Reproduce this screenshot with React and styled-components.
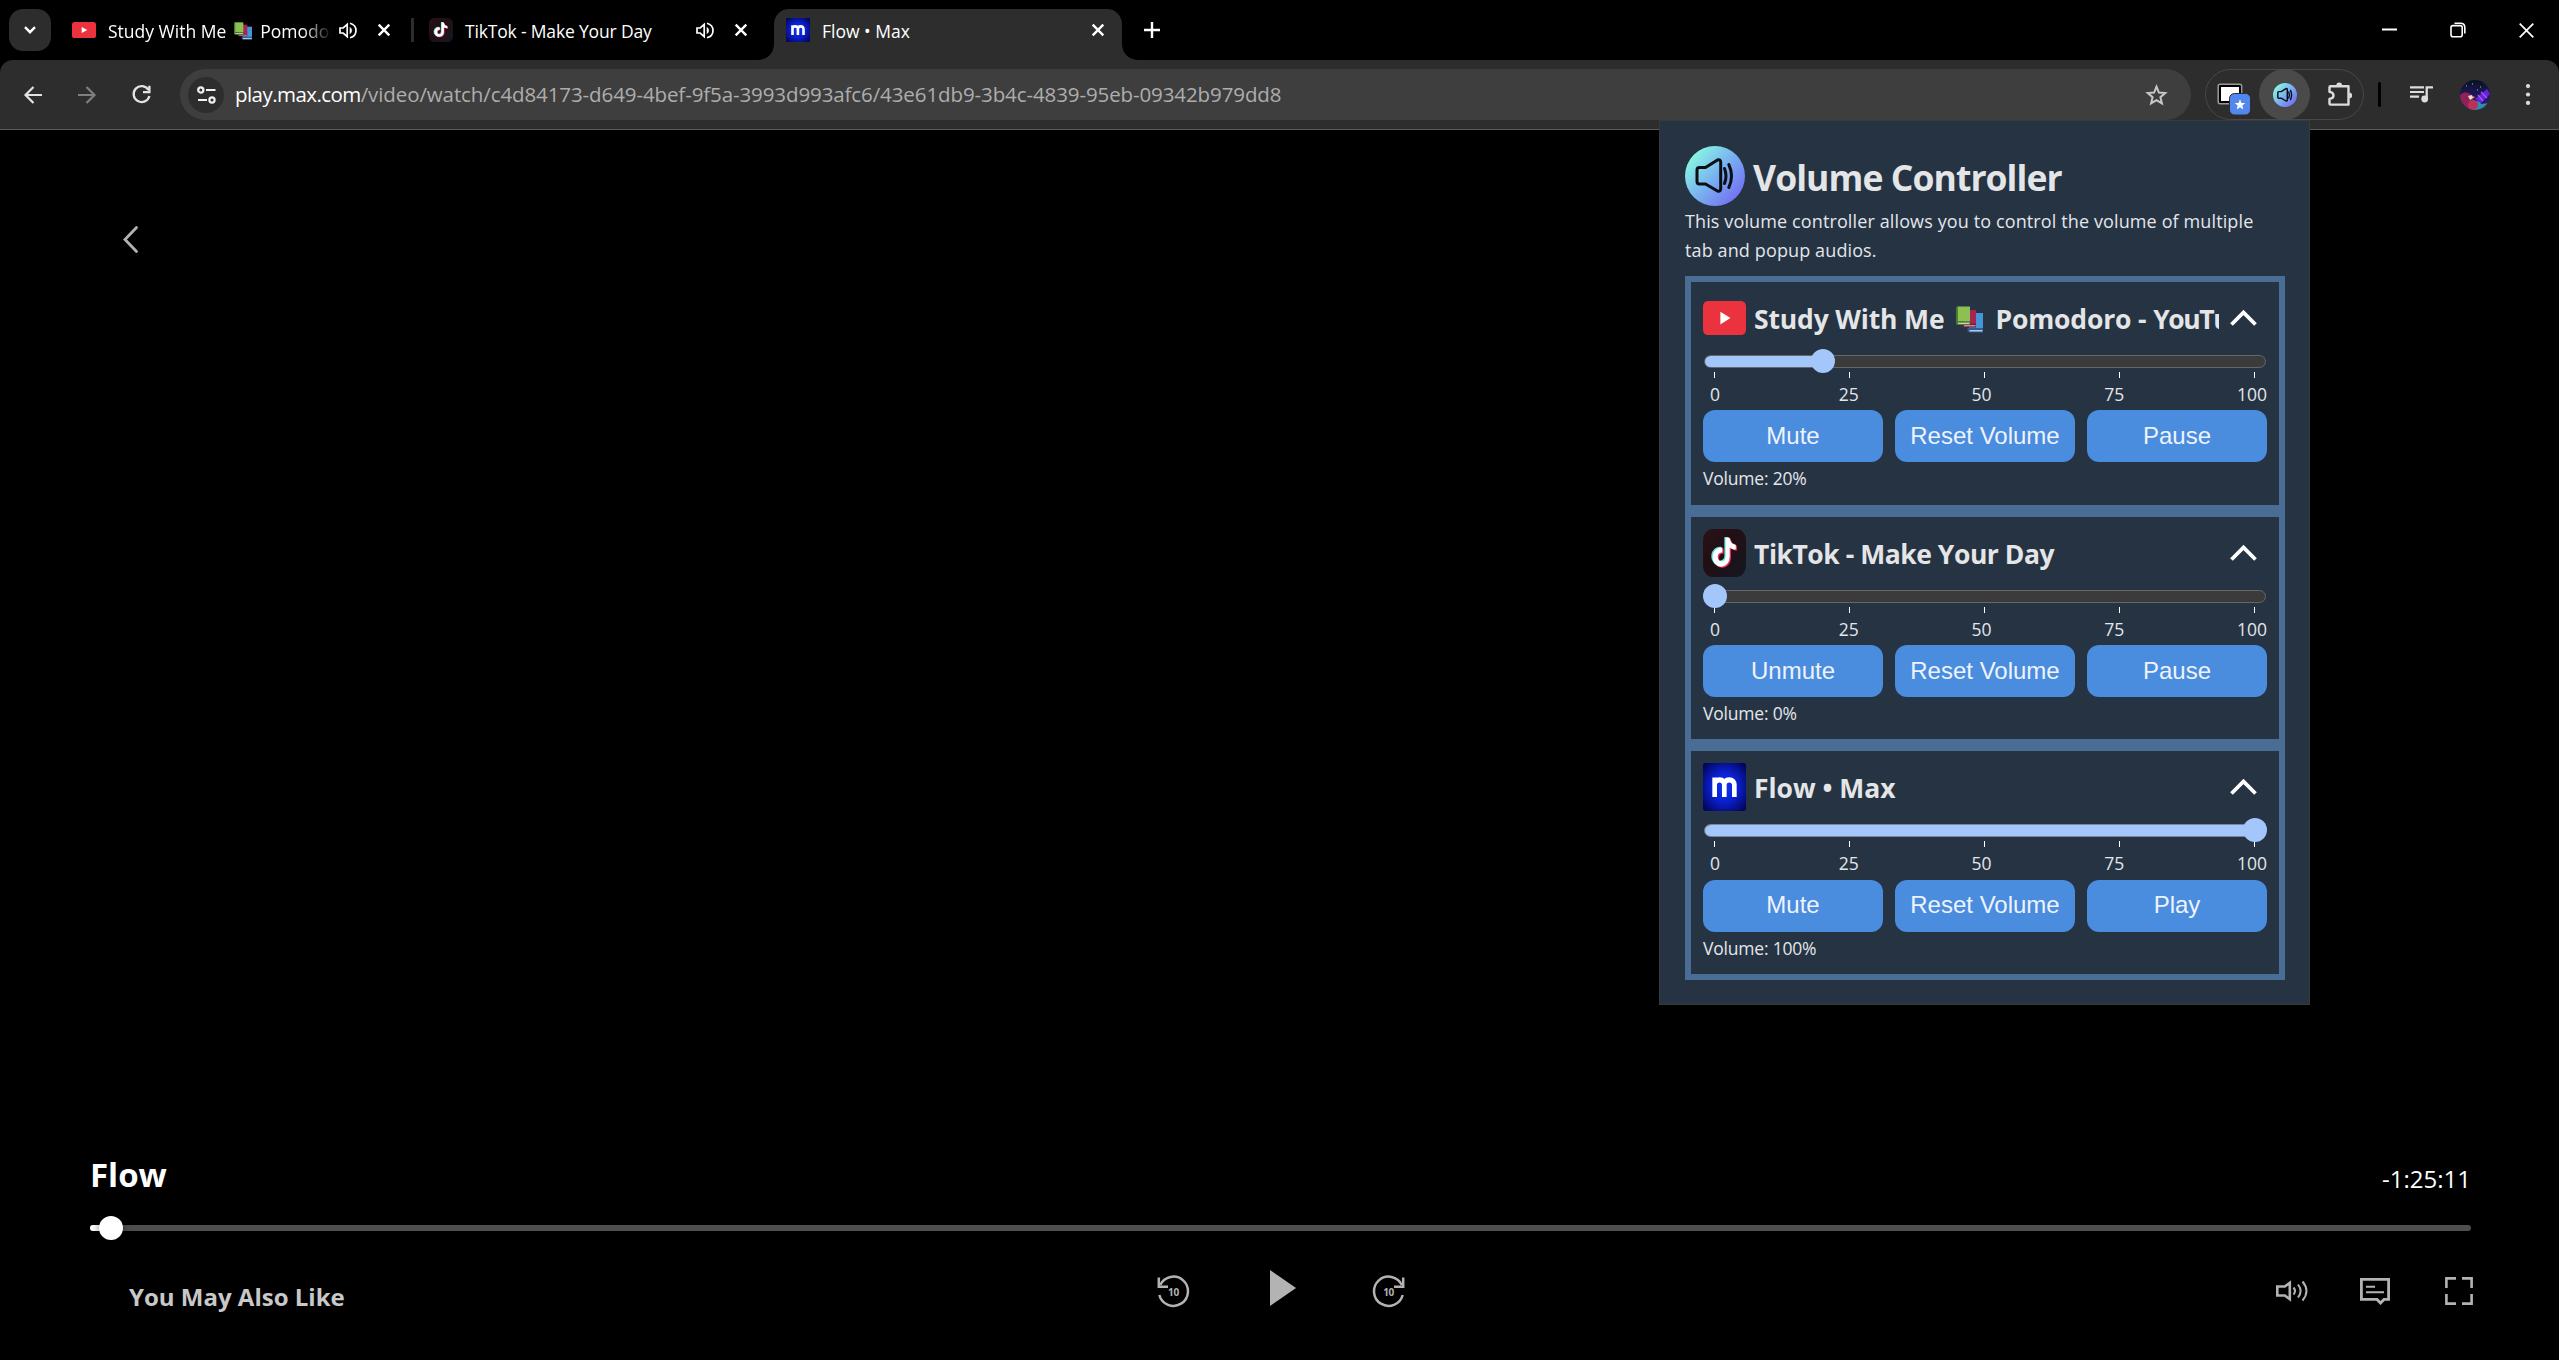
import React from "react";
import styled, { createGlobalStyle } from "styled-components";

const GlobalStyle = createGlobalStyle`
  *, *::before, *::after { box-sizing: border-box; }
  body { margin: 0; background: #000; overflow: hidden; }
  button { border: 0; padding: 0; background: none; color: inherit; }
`;

const uiFont = `"Segoe UI", "Open Sans", "Noto Sans", sans-serif`;

/* ---------- window ---------- */

const Window = styled.div`
  display: flex;
  flex-direction: column;
  width: 2559px;
  height: 1360px;
  background: #000;
  font-family: ${uiFont};
  color: #fff;
  overflow: hidden;
`;

const Svg = styled.svg`
  display: block;
  flex: none;
  overflow: visible;
`;

/* ---------- tab strip ---------- */

const TabStrip = styled.div`
  display: flex;
  align-items: center;
  height: 60px;
  padding-left: 9px;
`;

const TabSearch = styled.button`
  display: flex;
  align-items: center;
  justify-content: center;
  width: 42px;
  height: 42px;
  border-radius: 14px;
  background: #2d2d2d;
`;

const Tab = styled.div`
  position: relative;
  display: flex;
  align-items: center;
  width: ${(p) => p.$width}px;
  height: ${(p) => (p.$active ? 51 : 42)}px;
  align-self: ${(p) => (p.$active ? "flex-end" : "center")};
  padding: 0 0 ${(p) => (p.$active ? 9 : 0)}px ${(p) => p.$inset}px;
  border-radius: 15px 15px 0 0;
  background: ${(p) => (p.$active ? "#2d2d2d" : "transparent")};

  &::before,
  &::after {
    content: "";
    display: ${(p) => (p.$active ? "block" : "none")};
    position: absolute;
    bottom: 0;
    width: 15px;
    height: 15px;
  }
  &::before {
    left: -15px;
    background: radial-gradient(circle at 0 0, transparent 14.5px, #2d2d2d 15px);
  }
  &::after {
    right: -15px;
    background: radial-gradient(circle at 100% 0, transparent 14.5px, #2d2d2d 15px);
  }
`;

const TabTitle = styled.div`
  display: flex;
  align-items: center;
  flex: none;
  width: ${(p) => p.$width}px;
  margin-left: ${(p) => p.$gap || 12}px;
  padding-top: 2px;
  font-size: 17.5px;
  line-height: 24px;
  letter-spacing: ${(p) => p.$track || 0}px;
  white-space: pre;
  overflow: hidden;
  mask-image: ${(p) => (p.$fade ? "linear-gradient(90deg, #000 194px, transparent 224px)" : "none")};
`;

const TabIcon = styled.span`
  display: flex;
  margin-left: ${(p) => p.$gap}px;
`;

const TabSeparator = styled.span`
  width: 3px;
  height: 24px;
  background: #2d2d2d;
`;

const WindowControls = styled.div`
  display: flex;
  align-items: center;
  gap: 53px;
  margin-left: auto;
  padding-right: 25px;
`;

/* ---------- toolbar ---------- */

const Toolbar = styled.div`
  display: flex;
  align-items: center;
  height: 70px;
  padding-left: 24px;
  border-radius: 13px 13px 0 0;
  background: #2d2d2d;
  border-bottom: 1px solid #5b5b5b;
`;

const NavButtons = styled.div`
  display: flex;
  align-items: center;
  gap: 36px;
  width: 156px;
  height: 51px;
`;

const Omnibox = styled.div`
  display: flex;
  align-items: center;
  width: 2011px;
  height: 51px;
  padding: 0 23px 0 8px;
  border-radius: 26px;
  background: #3e3e3e;
`;

const SiteInfo = styled.span`
  display: flex;
  align-items: center;
  justify-content: center;
  width: 36px;
  height: 36px;
  border-radius: 50%;
  background: #2d2d2d;
`;

const Url = styled.div`
  flex: 1;
  margin-left: 11px;
  padding-bottom: 2px;
  font-size: 20.5px;
  line-height: 30px;
  letter-spacing: -0.1px;
  color: #adadad;
  white-space: nowrap;
`;

const Host = styled.span`
  color: #fff;
  letter-spacing: -0.56px;
`;

const Extensions = styled.div`
  display: flex;
  align-items: center;
  width: 159px;
  height: 51px;
  margin-left: 14px;
  padding-left: 11px;
  border: 1.5px solid #484848;
  border-radius: 26px;
`;

const ActiveExtension = styled.span`
  display: flex;
  align-items: center;
  justify-content: center;
  width: 51px;
  height: 51px;
  margin: 0 18px 0 8px;
  border-radius: 50%;
  background: #4a4a4a;
`;

const ToolbarDivider = styled.span`
  width: 3px;
  height: 25px;
  margin: 0 29px 0 14px;
  border-radius: 2px;
  background: #000;
`;

const ToolbarEnd = styled.div`
  display: flex;
  align-items: center;
  gap: 26.5px;
`;

/* ---------- player ---------- */

const Player = styled.main`
  display: flex;
  flex: 1;
  flex-direction: column;
  padding: 96px 88px 9px 90px;
`;

const BackButton = styled.button`
  display: flex;
  margin-left: 33px;
  align-self: flex-start;
`;

const PlayerTitleRow = styled.div`
  display: flex;
  justify-content: space-between;
  align-items: center;
  height: 45px;
  margin-top: auto;
`;

const PlayerTitle = styled.h1`
  margin: 0;
  font: 700 33px/45px "Open Sans", sans-serif;
`;

const TimeLeft = styled.span`
  padding-top: 8px;
  font: 500 24px/37px "Open Sans", sans-serif;
`;

const ProgressTrack = styled.div`
  position: relative;
  height: 6px;
  margin-top: 28px;
  border-radius: 3px;
  background: #4f4f4f;
`;

const ProgressFill = styled.div`
  width: 21px;
  height: 6px;
  border-radius: 3px;
  background: #fff;
`;

const ProgressThumb = styled.span`
  position: absolute;
  left: 9px;
  top: -9px;
  width: 24px;
  height: 24px;
  border-radius: 50%;
  background: #fff;
  box-shadow: 0 0 8px rgba(0, 0, 0, 0.5);
`;

const Controls = styled.div`
  display: grid;
  grid-template-columns: 1fr auto 1fr;
  align-items: center;
  height: 120px;
  color: #b3b3b3;
`;

const AlsoLike = styled.span`
  padding: 12px 0 0 39px;
  font: 700 24px/34px "Open Sans", sans-serif;
  color: #c8c8c8;
`;

const Transport = styled.div`
  display: flex;
  align-items: center;
`;

const PlaySlot = styled.span`
  display: flex;
  margin: 0 77px 6px 81px;
`;

const SideControls = styled.div`
  display: flex;
  justify-content: flex-end;
  align-items: center;
  gap: 53px;
  margin-right: -2px;
`;

/* ---------- extension popup ---------- */

const Popup = styled.aside`
  position: absolute;
  left: 1659px;
  top: 120px;
  width: 651px;
  height: 885px;
  padding: 25px 24px 0 25px;
  border: 1px solid #38393b;
  background: #253343;
  color: #e3e6ea;
`;

const PopupHeader = styled.header`
  display: flex;
  align-items: center;
  gap: 8px;
  height: 60px;
`;

const PopupTitle = styled.h2`
  margin: 0;
  padding-top: 2px;
  font-size: 35.5px;
  line-height: 50px;
  font-weight: 700;
  letter-spacing: -0.93px;
  color: #e4e5e7;
`;

const Description = styled.p`
  margin: 0 0 11px;
  padding-top: 1px;
  font-size: 18px;
  line-height: 29px;
  letter-spacing: 0.12px;
`;

const CardList = styled.div`
  display: flex;
  flex-direction: column;
  width: 600px;
  height: 704px;
`;

const Card = styled.section`
  display: flex;
  flex: 1 1 0;
  min-height: 0;
  flex-direction: column;
  padding: 12px;
  border: 6px solid #4a6d95;
`;

const CardHeader = styled.div`
  display: flex;
  align-items: center;
  height: 48px;
`;

const CardTitle = styled.h3`
  display: flex;
  align-items: center;
  width: 465px;
  margin: 0 0 0 8px;
  padding: 2px 0 0;
  font-size: 26.5px;
  line-height: 38px;
  font-weight: 700;
  letter-spacing: ${(p) => p.$track}px;
  white-space: pre;
  overflow: hidden;
  color: #e4e5e7;
`;

const SiteName = styled.span`
  letter-spacing: -1.4px;
`;

const Collapse = styled.button`
  display: flex;
  margin-left: 11px;
`;

const Slider = styled.div`
  position: relative;
  display: flex;
  height: 30px;
  padding: 13px 1px 4px;
`;

const Track = styled.div`
  flex: 1;
  height: 13px;
  margin-bottom: -4px;
  border: 1.5px solid ${(p) => (p.$full ? "#7d8798" : "#676767")};
  border-radius: 7px;
  background: #3b3b3b;
  overflow: hidden;
`;

const TrackFill = styled.div`
  height: 100%;
  background: #a3c6fb;
`;

const Thumb = styled.span`
  position: absolute;
  top: 7px;
  width: 24px;
  height: 24px;
  border-radius: 50%;
  background: #a3c6fb;
`;

const Ticks = styled.div`
  display: flex;
  justify-content: space-between;
  height: 6px;
  padding: 0 12px 0 11px;
`;

const Tick = styled.span`
  width: 1px;
  background: #fff;
`;

const Labels = styled.div`
  display: flex;
  justify-content: space-between;
  height: 32.4px;
  padding: 0 0 0 7px;
  font-size: 17.5px;
  line-height: 32px;

  > :first-child {
    width: 16px;
  }
`;

const Buttons = styled.div`
  display: grid;
  grid-template-columns: repeat(3, 180px);
  gap: 12px;
`;

const ActionButton = styled.button`
  height: 52px;
  padding-bottom: 1px;
  border-radius: 12px;
  background: #4a8cde;
  color: #eef3fb;
  font: 24px/50px Arial, "Liberation Sans", sans-serif;
`;

const VolumeText = styled.div`
  height: 30px;
  font-size: 17.5px;
  line-height: 32px;
  letter-spacing: -0.2px;
`;

/* ---------- drawings ---------- */

const YouTubeMark = ({ w, h }) => (
  <Svg width={w} height={h} viewBox="0 0 24 16" preserveAspectRatio="none">
    <rect width="24" height="16" rx="2.600" fill="#eb323f" />
    <path d="M9.700 5v6l5.600-3z" fill="#fff" />
  </Svg>
);

const notePath = "M12.6 5h2.3c.2 2 1.4 3.3 3.4 3.5v2.4c-1.3 0-2.4-.4-3.4-1.1v4.8a4.8 4.8 0 1 1-4.1-4.7v2.5a2.2 2.2 0 1 0 1.8 2.2z";

const TikTokMark = ({ w, h }) => (
  <Svg width={w} height={h} viewBox="0 0 24 24" preserveAspectRatio="none">
    <defs>
      <linearGradient id="tk" x1="0" y1="0" x2="1" y2="1">
        <stop offset="0" stopColor="#2a1218" />
        <stop offset="0.4" stopColor="#210f13" />
        <stop offset="1" stopColor="#151722" />
      </linearGradient>
    </defs>
    <rect width="24" height="24" rx="5.5" fill="url(#tk)" />
    <g transform="translate(0 -.6)">
      <path d={notePath} fill="#62ded9" transform="translate(-.7 -.4)" />
      <path d={notePath} fill="#ee2f58" transform="translate(.7 .5)" />
      <path d={notePath} fill="#fff" />
    </g>
  </Svg>
);

const MaxMark = ({ w, h }) => (
  <Svg width={w} height={h} viewBox="0 0 24 24" preserveAspectRatio="none">
    <defs>
      <radialGradient id="mx" cx=".5" cy=".5" r=".68">
        <stop offset="0" stopColor="#1132f4" />
        <stop offset="0.45" stopColor="#0a20d0" />
        <stop offset="1" stopColor="#02034f" />
      </radialGradient>
    </defs>
    <rect width="24" height="24" rx="1.2" fill="url(#mx)" />
    <path
      d="M6.500 17V7.200M6.500 11q0-2.600 2.700-2.600T11.900 11v6M11.900 11q0-2.600 2.700-2.600t2.900 2.600v6"
      fill="none"
      stroke="#fff"
      strokeWidth="2.600"
    />
  </Svg>
);

const Books = ({ size }) => (
  <Svg width={size} height={size} viewBox="0 0 27 27">
    <rect x="13" y="7" width="14" height="16" fill="#4596d8" />
    <path d="M11.500 22H27v4.500H13.500q-2 0-2-2z" fill="#2c5d93" />
    <path d="M13.500 24.800h13" stroke="#d9e6ef" strokeWidth="1.200" />
    <rect x="7" y="4" width="13" height="14" fill="#a8254f" />
    <path d="M5.500 17.500H20v4H8q-2.500 0-2.500-2z" fill="#7c1a3c" />
    <path d="M8 19.800h11.500" stroke="#e0bfca" strokeWidth="1" />
    <path d="M1 0.500h13v15H1z" fill="#8cc151" />
    <path d="M0 2q0-1.500 2-1.500V15.500H14V19H2q-2 0-2-2z" fill="#45802f" />
    <path d="M2 17.300h11.500" stroke="#dcead0" strokeWidth="1.100" />
  </Svg>
);

const VolumeMark = ({ size, id, stroke = 3 }) => (
  <Svg width={size} height={size} viewBox="0 0 60 60">
    <defs>
      <linearGradient id={id} x1=".1" y1=".15" x2=".9" y2=".85">
        <stop offset="0" stopColor="#89f7e3" />
        <stop offset="0.5" stopColor="#79b2f0" />
        <stop offset="1" stopColor="#7370f3" />
      </linearGradient>
    </defs>
    <circle cx="30" cy="30" r="30" fill={`url(#${id})`} />
    <g fill="none" stroke="#0b0f14" strokeWidth={stroke} strokeLinecap="round" strokeLinejoin="round">
      <path d="M14.500 21.500h6L32.500 14q3-1 3.200 2v27q-.2 3-3.200 2L20.500 38h-6q-2.500 0-2.500-2.500V24q0-2.500 2.500-2.500z" />
      <path d="M39.500 22.500q3 7.500 0 15M43.800 18.500q5.400 11.500 0 23" />
    </g>
  </Svg>
);

const TabSpeaker = () => (
  <Svg width="18" height="17" viewBox="0 0 18 17" fill="none" stroke="#fff" strokeWidth="1.700">
    <path d="M1 6h3.200l4-3.600v12.200L4.200 11H1z" />
    <path d="M11 5.400q1.700 1.200 1.700 3.100T11 11.600z" fill="#fff" strokeWidth=".6" />
    <path d="M11 1.200q6 1.600 6 7.300t-6 7.300" />
  </Svg>
);

const Cross = ({ size, weight }) => (
  <Svg width={size} height={size} viewBox={`0 0 ${size} ${size}`}>
    <path d={`M.7 .7L${size - 0.7} ${size - 0.7}M${size - 0.7} .7L.7 ${size - 0.7}`} stroke="#fff" strokeWidth={weight} />
  </Svg>
);

const Stroke = ({ w, h, d, color = "currentColor", weight = 2.2, cap, join, children }) => (
  <Svg
    width={w}
    height={h}
    viewBox={`0 0 ${w} ${h}`}
    fill="none"
    stroke={color}
    strokeWidth={weight}
    strokeLinecap={cap}
    strokeLinejoin={join}
  >
    <path d={d} />
    {children}
  </Svg>
);

const Avatar = () => (
  <Svg width="30" height="30" viewBox="0 0 30 30">
    <defs>
      <clipPath id="av">
        <circle cx="15" cy="15" r="15" />
      </clipPath>
      <linearGradient id="sky" x1="0" y1="0" x2="0" y2="1">
        <stop offset="0" stopColor="#08101f" />
        <stop offset="0.4" stopColor="#1a1650" />
        <stop offset="1" stopColor="#3a1c7c" />
      </linearGradient>
    </defs>
    <g clipPath="url(#av)">
      <rect width="30" height="30" fill="url(#sky)" />
      <path d="M0 15q5-5 10-1 4 3 3 8l-2 8H0z" fill="#8d2353" />
      <path d="M9 30q0-9 6-9t6 3l9-1v7z" fill="#2d8fb0" />
      <circle cx="13" cy="25" r="5" fill="#b8325a" />
      <path d="M15 19L27 9l3 5-9 9z" fill="#6a22d8" />
      <path d="M18 15l5 6M21 12l6 6" stroke="#a25cff" strokeWidth="1.200" />
      <path d="M8 16l4-1 1 3-3 2z" fill="#f0d9e6" />
      <path d="M12 16l3 1-2 1.500z" fill="#f1a93a" />
      <path d="M6 6h1M12 4h1M20 7h1M17 10h1" stroke="#9fb6e8" />
    </g>
  </Svg>
);

const Skip = ({ forward }) => (
  <Svg width="32" height="33" viewBox="0 0 32 33">
    <g
      transform={forward ? "translate(32 0) scale(-1 1)" : undefined}
      fill="none"
      stroke="currentColor"
      strokeWidth="2.500"
    >
      <path d="M3.200 10A14.600 14.600 0 1 1 2.300 20" />
      <path d="M1.800 2.500v9.300H11" />
    </g>
    <text
      x={forward ? 15.6 : 16.4}
      y="20.800"
      textAnchor="middle"
      fontFamily="Open Sans, sans-serif"
      fontSize="10"
      fontWeight="700"
      letterSpacing="-.4"
      fill="currentColor"
    >
      10
    </text>
  </Svg>
);

const icons = { youtube: YouTubeMark, tiktok: TikTokMark, max: MaxMark };

/* ---------- pieces ---------- */

function VolumeCard({ icon, iconHeight, title, track, value, actions }) {
  const Icon = icons[icon];
  return (
    <Card>
      <CardHeader>
        <Icon w={43} h={iconHeight} />
        <CardTitle $track={track}>{title}</CardTitle>
        <Collapse>
          <Stroke w={27} h={16} d="M1.500 14.500L13.500 2.500l12 12" color="#fff" weight={3.8} />
        </Collapse>
      </CardHeader>
      <Slider>
        <Track $full={value === 100}>
          <TrackFill style={{ width: `${value}%` }} />
        </Track>
        <Thumb style={{ left: 540 * (value / 100) }} />
      </Slider>
      <Ticks>
        {[0, 25, 50, 75, 100].map((n) => (
          <Tick key={n} />
        ))}
      </Ticks>
      <Labels>
        {[0, 25, 50, 75, 100].map((n) => (
          <span key={n}>{n}</span>
        ))}
      </Labels>
      <Buttons>
        {actions.map((a) => (
          <ActionButton key={a}>{a}</ActionButton>
        ))}
      </Buttons>
      <VolumeText>Volume: {value}%</VolumeText>
    </Card>
  );
}

const BookGap = styled.span`
  display: flex;
  margin: 0 ${(p) => p.$right}px 0 ${(p) => p.$left}px;
`;

export default function App() {
  return (
    <>
      <GlobalStyle />
      <Window>
        <TabStrip>
          <TabSearch>
            <Stroke w={12} h={8} d="M1 1.200l5 5 5-5" color="#fff" weight={2.4} />
          </TabSearch>
          <Tab $width={360} $inset={21}>
            <YouTubeMark w={24} h={16} />
            <TabTitle $width={224} $fade>
              Study With Me
              <BookGap $left={8} $right={8}>
                <Books size={18} />
              </BookGap>
              Pomodoro - YouTube
            </TabTitle>
            <TabIcon $gap={7}>
              <TabSpeaker />
            </TabIcon>
            <TabIcon $gap={21}>
              <Cross size={12} weight={2.4} />
            </TabIcon>
          </Tab>
          <TabSeparator />
          <Tab $width={360} $inset={15}>
            <TikTokMark w={24} h={24} />
            <TabTitle $width={225} $track={-0.17}>
              TikTok - Make Your Day
            </TabTitle>
            <TabIcon $gap={6}>
              <TabSpeaker />
            </TabIcon>
            <TabIcon $gap={21}>
              <Cross size={12} weight={2.4} />
            </TabIcon>
          </Tab>
          <Tab $active $width={348} $inset={12}>
            <MaxMark w={24} h={24} />
            <TabTitle $width={258}>Flow • Max</TabTitle>
            <TabIcon $gap={12}>
              <Cross size={12} weight={2.4} />
            </TabIcon>
          </Tab>
          <TabIcon $gap={22}>
            <Stroke w={16} h={16} d="M8 0v16M0 8h16" color="#fff" weight={2.4} />
          </TabIcon>
          <WindowControls>
            <Stroke w={15} h={15} d="M0 6.500h15" color="#fff" weight={2} />
            <Stroke w={16} h={16} d="M4.500 1.200h6q4.300 0 4.300 4.300v6" color="#fff" weight={1.6}>
              <rect x="1" y="3.600" width="11.200" height="11.200" rx="2" />
            </Stroke>
            <Cross size={15} weight={1.7} />
          </WindowControls>
        </TabStrip>

        <Toolbar>
          <NavButtons>
            <Stroke w={18} h={18} d="M18 9H2M9.500 1L1.500 9l8 8" color="#e3e3e3" weight={2.2} />
            <Stroke w={18} h={18} d="M0 9h16M8.500 1l8 8-8 8" color="#7f7f7f" weight={2.2} />
            <Stroke w={19} h={19} d="M16.400 4.800A8 8 0 1 0 17.400 11M17.400 .8v6.400H11" color="#e3e3e3" weight={2.3} />
          </NavButtons>
          <Omnibox>
            <SiteInfo>
              <Stroke w={19} h={18} d="M9 4h9.500M1 14h9" color="#f1f1f1" weight={2.2}>
                <circle cx="3.800" cy="4" r="2.600" />
                <circle cx="15" cy="14" r="2.600" />
              </Stroke>
            </SiteInfo>
            <Url>
              <Host>play.max.com</Host>
              /video/watch/c4d84173-d649-4bef-9f5a-3993d993afc6/43e61db9-3b4c-4839-95eb-09342b979dd8
            </Url>
            <Stroke
              w={23}
              h={22}
              d="M11.500 2.700l2.400 5.900 6.300.5-4.800 4.100 1.500 6.200-5.400-3.300-5.400 3.300 1.500-6.200-4.800-4.100 6.300-.5z"
              color="#c7c7c7"
              weight={2}
            />
          </Omnibox>
          <Extensions>
            <Svg width="34" height="33" viewBox="0 0 34 33">
              <rect x="1.200" y="6.200" width="23.500" height="19.500" rx="2" fill="#000" stroke="#9a9a9a" strokeWidth="1.500" />
              <rect x="4" y="9" width="18" height="14" fill="#fff" />
              <rect x="12.500" y="15.500" width="21" height="21.500" rx="5" fill="#5287ee" stroke="#2d2d2d" />
              <path d="M23 21.300l1.400 3.600 3.900.2-3 2.500 1 3.800-3.300-2.100-3.300 2.100 1-3.800-3-2.500 3.900-.2z" fill="#fff" />
            </Svg>
            <ActiveExtension>
              <VolumeMark size={24} id="vs" stroke={3.6} />
            </ActiveExtension>
            <Stroke
              w={25}
              h={25}
              d="M2.500 4.200h18v18.400h-18q-1 0-1-1v-4.700q4-.6 4-3.500t-4-3.500V5.200q0-1 1-1z"
              color="#dcdcdc"
              weight={2.4}
              join="round"
            >
              <path d="M8.300 3.500a2.900 2.900 0 0 1 5.800 0zM21.200 10.500a2.900 2.900 0 0 1 0 5.800z" fill="#dcdcdc" stroke="none" />
            </Stroke>
          </Extensions>
          <ToolbarDivider />
          <ToolbarEnd>
            <Svg width="23" height="17" viewBox="0 0 23 17">
              <path d="M0 1.300h14M0 6h14M0 10.700h9" stroke="#dcdcdc" strokeWidth="2.200" />
              <path d="M16.700 12.500V1.300H23" stroke="#dcdcdc" strokeWidth="2.300" fill="none" />
              <circle cx="14.700" cy="13" r="3.400" fill="#dcdcdc" />
            </Svg>
            <Avatar />
            <Svg width="25" height="21" viewBox="0 0 25 21" fill="#dcdcdc">
              <circle cx="12" cy="2.100" r="2.100" />
              <circle cx="12" cy="10.500" r="2.100" />
              <circle cx="12" cy="18.900" r="2.100" />
            </Svg>
          </ToolbarEnd>
        </Toolbar>

        <Player>
          <BackButton>
            <Stroke w={15} h={27} d="M13.500 1.500L2 13.500l11.500 12" color="#b3b3b3" weight={2.8} cap="round" />
          </BackButton>
          <PlayerTitleRow>
            <PlayerTitle>Flow</PlayerTitle>
            <TimeLeft>-1:25:11</TimeLeft>
          </PlayerTitleRow>
          <ProgressTrack>
            <ProgressFill />
            <ProgressThumb />
          </ProgressTrack>
          <Controls>
            <AlsoLike>You May Also Like</AlsoLike>
            <Transport>
              <Skip />
              <PlaySlot>
                <Svg width="26" height="36" viewBox="0 0 26 36" fill="currentColor">
                  <path d="M0 0l26 18L0 36z" />
                </Svg>
              </PlaySlot>
              <Skip forward />
            </Transport>
            <SideControls>
              <Stroke w={31} h={22} d="M1.300 6.500h7.500L13.800 2.800v16.400L8.800 15.500H1.300z" weight={2.6}>
                <path d="M17.500 7.500q3 3.500 0 7M22 4.500q5.200 6.500 0 13M26.500 1.500q8 9.500 0 19" strokeWidth="2" />
              </Stroke>
              <Stroke w={32} h={27} d="M1.400 1.400h27.200v20H24l-3.500 3.600-3.500-3.600H1.400z" weight={2.8}>
                <path d="M6 8.700h9M6 14.300h18" strokeWidth="2" />
              </Stroke>
              <Stroke
                w={28}
                h={28}
                d="M1.400 11V1.400H11M17 1.400h9.600V11M26.600 17v9.600H17M11 26.600H1.400V17"
                weight={2.6}
              />
            </SideControls>
          </Controls>
        </Player>

        <Popup>
          <PopupHeader>
            <VolumeMark size={60} id="vl" />
            <PopupTitle>Volume Controller</PopupTitle>
          </PopupHeader>
          <Description>
            This volume controller allows you to control the volume of multiple
            <br />
            tab and popup audios.
          </Description>
          <CardList>
            <VolumeCard
              icon="youtube"
              iconHeight={34}
              title={
                <>
                  Study With Me
                  <BookGap $left={12} $right={12}>
                    <Books size={27} />
                  </BookGap>
                  Pomodoro - <SiteName>YouTube</SiteName>
                </>
              }
              track={-0.15}
              value={20}
              actions={["Mute", "Reset Volume", "Pause"]}
            />
            <VolumeCard
              icon="tiktok"
              iconHeight={48}
              title="TikTok - Make Your Day"
              track={-0.46}
              value={0}
              actions={["Unmute", "Reset Volume", "Pause"]}
            />
            <VolumeCard
              icon="max"
              iconHeight={48}
              title="Flow • Max"
              track={-0.03}
              value={100}
              actions={["Mute", "Reset Volume", "Play"]}
            />
          </CardList>
        </Popup>
      </Window>
    </>
  );
}
